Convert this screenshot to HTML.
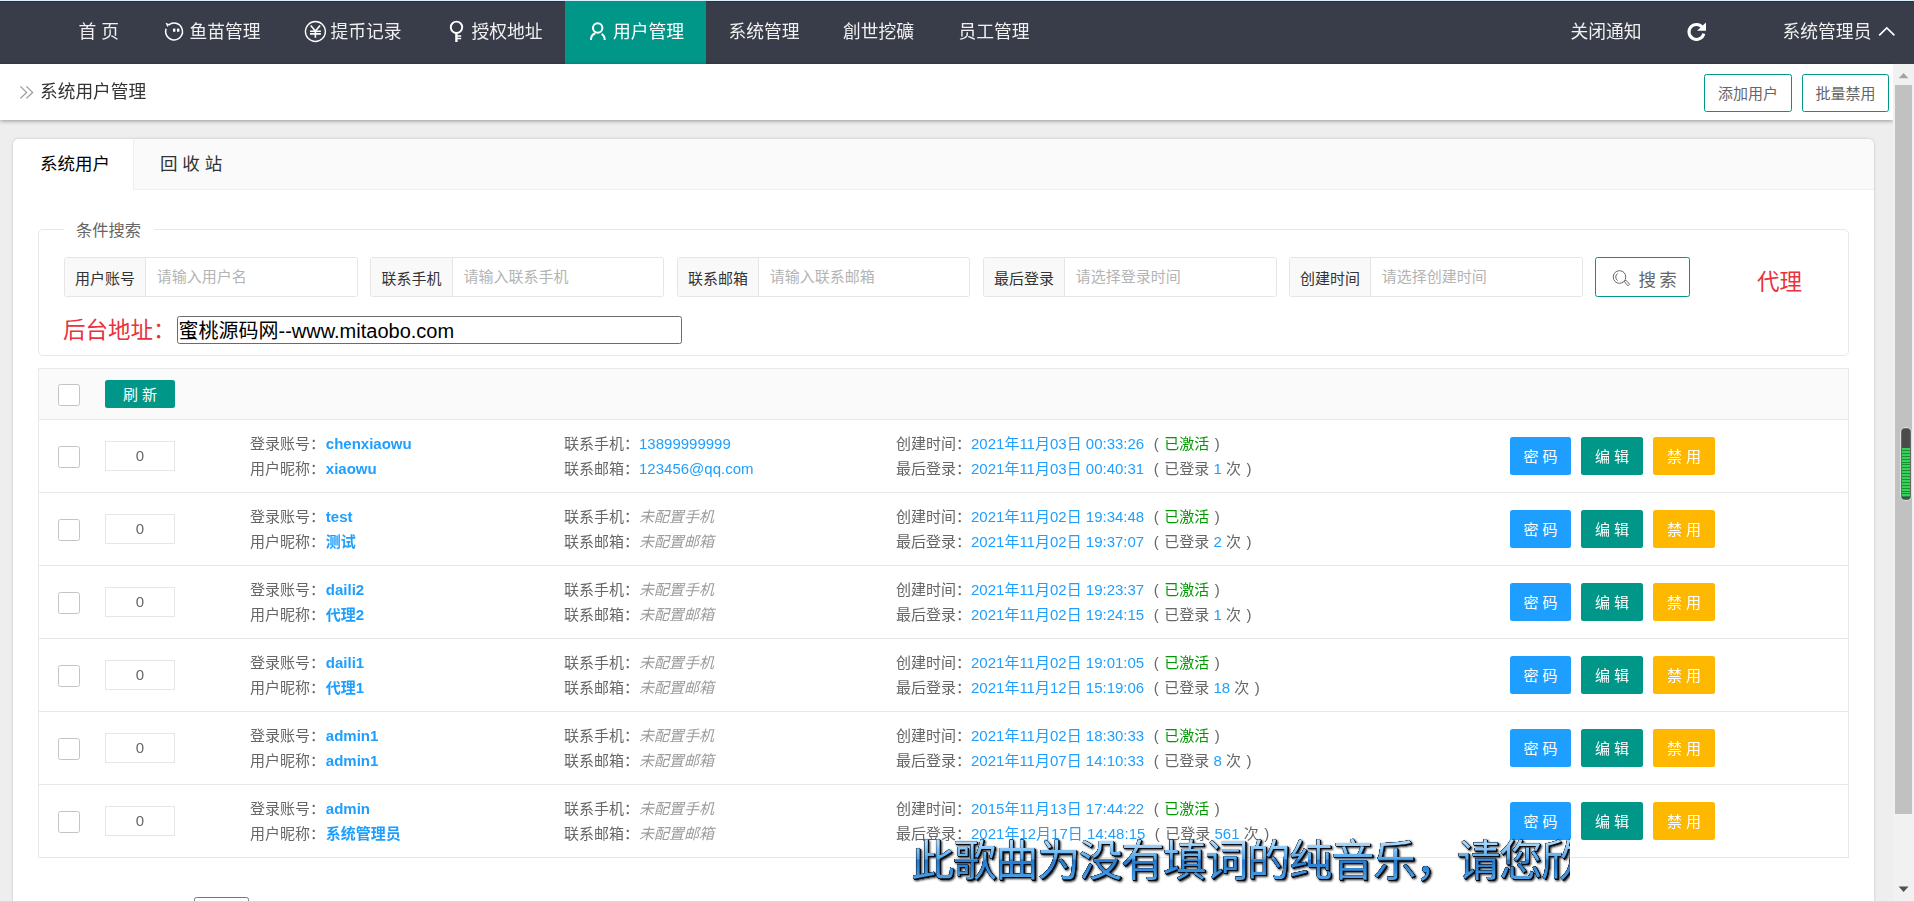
<!DOCTYPE html>
<html lang="zh-CN">
<head>
<meta charset="utf-8">
<title>系统用户管理</title>
<style>
*{box-sizing:border-box;margin:0;padding:0}
html,body{width:1914px;height:902px;overflow:hidden;background:#eee}
body{position:relative;font-family:"Liberation Sans","Noto Sans CJK SC",sans-serif;font-size:15px;color:#666;line-height:1}
.abs{position:absolute}
.t{position:absolute;white-space:nowrap;line-height:1}
svg{position:absolute;overflow:visible}
/* top nav */
#topline{left:0;top:0;width:1914px;height:1px;background:#dcf1ff}
#nav{left:0;top:1px;width:1914px;height:63px;background:#393d49;border-top:1px solid #2f3140}
.nv{color:#f0f0f0;font-size:17.8px;top:24px;margin-left:-0.5px}
#navt{position:absolute;left:0;top:0;width:1914px;height:64px;will-change:transform}
#navact{left:565px;top:1px;width:141px;height:63px;background:#009688}
/* header */
#hdr{left:0;top:64px;width:1893px;height:56px;background:#fff;box-shadow:0 1px 4px rgba(0,0,0,.38)}
#hdr .ttl{left:40.5px;top:82px;font-size:17.5px;color:#333}
.obtn{position:absolute;top:74px;height:38px;border:1px solid #009688;border-radius:2.5px;background:#fff;color:#666;font-size:15px;text-align:center;line-height:37.5px;white-space:nowrap}
/* card */
#card{left:13px;top:139px;width:1861px;height:780px;background:#fff;border-radius:6px 6px 0 0;box-shadow:0 0 3px rgba(0,0,0,.2)}
#tabbar{left:13px;top:139px;width:1861px;height:51px;background:#fafafa;border-bottom:1px solid #eee;border-radius:6px 6px 0 0}
#tabact{left:13px;top:139px;width:121px;height:51px;background:#fff;border-right:1px solid #eee;border-radius:6px 0 0 0}
.tab{font-size:17.5px;top:155.6px}
/* fieldset */
#fs{left:38px;top:229px;width:1811px;height:127px;border:1px solid #e8e8e8;border-radius:5px}
#lg{left:64px;top:220px;width:90px;height:20px;background:#fff}
.grp{position:absolute;top:257px;width:294px;height:40px;border:1px solid #e6e6e6;border-radius:2.5px;background:#fff}
.grp b{position:absolute;left:0;top:0;width:81px;height:38px;background:#f9f9f9;border-right:1px solid #e6e6e6;font-weight:normal;color:#333;font-size:15px;line-height:41px;text-align:center;white-space:nowrap}
.grp i{position:absolute;left:91.8px;top:0;font-style:normal;color:#b4b4b4;font-size:15px;line-height:37px;white-space:nowrap}
/* table */
#tbl{left:38px;top:368px;width:1811px;height:490px;border:1px solid #e8e8e8;background:#fff}
#thead{left:39px;top:369px;width:1809px;height:50px;background:#fafafa}
.hl{position:absolute;left:39px;width:1809px;height:1px;background:#e8e8e8}
.cb{position:absolute;left:58px;width:22px;height:22px;border:1px solid #c4c4c4;border-radius:2.5px;background:#fff}
.srt{position:absolute;left:105px;width:70px;height:30px;border:1px solid #e6e6e6;background:#fff;color:#666;font-size:15px;text-align:center;line-height:28px}
.row{position:absolute;left:0;width:1914px;height:73px}
.row .t{font-size:15px;color:#666}
.l1{top:16.5px}.l2{top:41.5px}
.c1{left:250px}.c2{left:564px}.c3{left:896px}
.bl{color:#1e9fff}.bb{color:#1e9fff;font-weight:bold;margin-left:.8px}
.gr{color:#009a00}
.p1{margin-left:9.5px}.p2{margin-left:5.5px}.p3{margin-left:5.5px}
.em{color:#9c9c9c;font-style:italic}
.btn{position:absolute;top:17.5px;width:62px;height:37.5px;border-radius:2.5px;color:#fff;font-size:15px;line-height:39.5px;text-align:center;white-space:nowrap}
.b1{left:1510px;width:61px;background:#1e9fff}.b2{left:1581px;background:#009688}.b3{left:1653px;background:#ffb800}
</style>
</head>
<body>
<div class="abs" id="topline"></div>
<div class="abs" id="nav"></div>
<div class="abs" id="navact"></div>
<div id="navt">
<span class="t nv" style="left:79px">首 页</span>
<span class="t nv" style="left:190px">鱼苗管理</span>
<span class="t nv" style="left:331px">提币记录</span>
<span class="t nv" style="left:472px">授权地址</span>
<span class="t nv" style="left:613.5px;color:#fff">用户管理</span>
<span class="t nv" style="left:729px">系统管理</span>
<span class="t nv" style="left:843.5px">創世挖礦</span>
<span class="t nv" style="left:959px">员工管理</span>
<span class="t nv" style="left:1571px">关闭通知</span>
<span class="t nv" style="left:1783px">系统管理员</span>
</div>
<!-- fish/face icon -->
<svg style="left:160px;top:17px" width="30" height="30" viewBox="160 17 30 30" fill="none" stroke="#fff" stroke-width="1.5">
<path d="M168.49 25.22 A8.4 8.4 0 1 1 166.1 28.83"/>
<path d="M165.5 22.7 L169.2 24.1 L167.4 26.9 Z" fill="#fff" stroke="none"/>
<rect x="173" y="28.6" width="2.4" height="3.1" fill="#fff" stroke="none"/>
<rect x="177" y="28.6" width="2.4" height="3.1" fill="#fff" stroke="none"/>
</svg>
<!-- yen icon -->
<svg style="left:300px;top:17px" width="30" height="30" viewBox="300 17 30 30" fill="none" stroke="#fff">
<circle cx="315.4" cy="31.5" r="10" stroke-width="1.3"/>
<path d="M310.7 25.5 L315.4 31 L320.1 25.5 M315.4 31 V37.7 M310 31.2 H320.9 M310 33.9 H320.9" stroke-width="1.6"/>
</svg>
<!-- key icon -->
<svg style="left:445px;top:17px" width="30" height="30" viewBox="445 17 30 30" fill="none" stroke="#fff">
<circle cx="456.5" cy="27.3" r="5.7" stroke-width="1.9"/>
<path d="M456.4 33 V42" stroke-width="2.4"/>
<path d="M457 36 H461.2 M457 38.4 H461.2" stroke-width="1.5"/>
</svg>
<!-- user icon -->
<svg style="left:585px;top:17px" width="30" height="30" viewBox="585 17 30 30" fill="none" stroke="#fff" stroke-width="2">
<circle cx="597.7" cy="28" r="4.7"/>
<path d="M591 40 A6.9 6.9 0 0 1 595.3 33.2"/>
<path d="M601.6 33.8 A7 7 0 0 1 604.7 40"/>
</svg>
<!-- refresh icon -->
<svg style="left:1682px;top:17px" width="30" height="30" viewBox="1682 17 30 30" fill="none" stroke="#fff">
<path d="M1702.6 27.6 A7.5 7.5 0 1 0 1703.8 33.6" stroke-width="3"/>
<path d="M1706 22.6 V30.8 H1697 Z" fill="#fff" stroke="none"/>
</svg>
<!-- caret up -->
<svg style="left:1875px;top:20px" width="24" height="20" viewBox="1875 20 24 20" fill="none" stroke="#fff" stroke-width="1.6">
<path d="M1879.2 35.4 L1886.8 27.9 L1894.4 35.4"/>
</svg>
<div class="abs" id="hdr"></div>
<svg style="left:15px;top:82px" width="24" height="22" viewBox="15 82 24 22" fill="none" stroke="#999" stroke-width="1.3">
<path d="M20.4 86.4 L26.6 92.4 L20.4 98.4 M26.4 86.4 L32.6 92.4 L26.4 98.4"/>
</svg>
<span class="t ttl" style="left:40px;top:84px;font-size:17.7px;color:#333">系统用户管理</span>
<div class="obtn" style="left:1704px;width:88px">添加用户</div>
<div class="obtn" style="left:1802px;width:87px">批量禁用</div>
<!-- scrollbar -->
<div class="abs" style="left:1893px;top:64px;width:21px;height:838px;background:#f1f1f1"></div>
<div class="abs" style="left:1895px;top:85px;width:17px;height:729px;background:#c1c1c1"></div>
<svg style="left:1893px;top:64px" width="21" height="838" viewBox="1893 64 21 838"><path d="M1898.7 78.3 H1908.5 L1903.6 73 Z" fill="#a3a3a3"/><path d="M1898.7 886.5 H1908.5 L1903.6 892 Z" fill="#505050"/></svg>

<div class="abs" id="card"></div>
<div class="abs" id="tabbar"></div>
<div class="abs" id="tabact"></div>
<span class="t tab" style="left:40px;color:#000">系统用户</span>
<span class="t tab" style="left:160px;color:#333">回 收 站</span>
<div class="abs" id="fs"></div>
<div class="abs" id="lg"></div>
<span class="t" style="left:76px;top:222px;font-size:16.25px;color:#666">条件搜索</span>
<div class="grp" style="left:64px"><b>用户账号</b><i>请输入用户名</i></div>
<div class="grp" style="left:370px"><b style="width:82px">联系手机</b><i style="left:92.4px">请输入联系手机</i></div>
<div class="grp" style="left:677px;width:293px"><b>联系邮箱</b><i>请输入联系邮箱</i></div>
<div class="grp" style="left:983px"><b>最后登录</b><i>请选择登录时间</i></div>
<div class="grp" style="left:1289px"><b>创建时间</b><i>请选择创建时间</i></div>
<div class="abs" style="left:1595px;top:257px;width:95px;height:40px;border:1px solid #009688;border-radius:2.5px;background:#fff"></div>
<svg style="left:1608px;top:266px" width="26" height="26" viewBox="1608 266 26 26" fill="none" stroke="#6a6a6a" stroke-width="1">
<circle cx="1619.5" cy="277" r="6.3"/>
<path d="M1617.6 273.4 A4.4 4.4 0 0 0 1617.6 280.6"/>
<path d="M1624.3 281.6 L1625.9 280.2 L1629.6 284.2 L1628 285.8 Z"/>
</svg>
<span class="t" style="left:1638.5px;top:271.5px;font-size:17.5px;word-spacing:-1.5px;color:#666">搜 索</span>
<span class="t" style="left:1757px;top:272.2px;font-size:22.5px;color:#e8323c">代理</span>
<span class="t" style="left:63px;top:319.8px;font-size:22.5px;color:#e8323c">后台地址：</span>
<div class="abs" style="left:177px;top:316px;width:505px;height:28px;border:1px solid #6b6b6b;border-radius:2.5px;background:#fff"></div>
<span class="t" style="left:178.5px;top:320.8px;font-size:20px;color:#000">蜜桃源码网--www.mitaobo.com</span>

<div class="abs" id="tbl"></div>
<div class="abs" id="thead"></div>
<div class="cb" style="top:384px"></div>
<div class="abs" style="left:105px;top:380px;width:70px;height:28px;background:#009688;border-radius:2.5px;color:#fff;font-size:15px;line-height:30.5px;text-align:center;white-space:nowrap">刷 新</div>
<div class="hl" style="top:419px"></div>
<div class="row" style="top:419.5px">
<div class="cb" style="top:26.5px"></div><div class="srt" style="top:21.5px">0</div>
<span class="t c1 l1">登录账号：<span class="bb">chenxiaowu</span></span>
<span class="t c1 l2">用户昵称：<span class="bb">xiaowu</span></span>
<span class="t c2 l1">联系手机：<span class="bl">13899999999</span></span>
<span class="t c2 l2">联系邮箱：<span class="bl">123456@qq.com</span></span>
<span class="t c3 l1">创建时间：<span class="bl">2021年11月03日 00:33:26</span><span class="p1">(</span><span class="gr p2">已激活</span><span class="p3">)</span></span>
<span class="t c3 l2">最后登录：<span class="bl">2021年11月03日 00:40:31</span><span class="p1">(</span><span class="p2">已登录</span> <span class="bl">1</span> 次<span class="p3">)</span></span>
<div class="btn b1">密 码</div><div class="btn b2">编 辑</div><div class="btn b3">禁 用</div>
</div>
<div class="hl" style="top:492px"></div>
<div class="row" style="top:492.5px">
<div class="cb" style="top:26.5px"></div><div class="srt" style="top:21.5px">0</div>
<span class="t c1 l1">登录账号：<span class="bb">test</span></span>
<span class="t c1 l2">用户昵称：<span class="bb">测试</span></span>
<span class="t c2 l1">联系手机：<span class="em">未配置手机</span></span>
<span class="t c2 l2">联系邮箱：<span class="em">未配置邮箱</span></span>
<span class="t c3 l1">创建时间：<span class="bl">2021年11月02日 19:34:48</span><span class="p1">(</span><span class="gr p2">已激活</span><span class="p3">)</span></span>
<span class="t c3 l2">最后登录：<span class="bl">2021年11月02日 19:37:07</span><span class="p1">(</span><span class="p2">已登录</span> <span class="bl">2</span> 次<span class="p3">)</span></span>
<div class="btn b1">密 码</div><div class="btn b2">编 辑</div><div class="btn b3">禁 用</div>
</div>
<div class="hl" style="top:565px"></div>
<div class="row" style="top:565.5px">
<div class="cb" style="top:26.5px"></div><div class="srt" style="top:21.5px">0</div>
<span class="t c1 l1">登录账号：<span class="bb">daili2</span></span>
<span class="t c1 l2">用户昵称：<span class="bb">代理2</span></span>
<span class="t c2 l1">联系手机：<span class="em">未配置手机</span></span>
<span class="t c2 l2">联系邮箱：<span class="em">未配置邮箱</span></span>
<span class="t c3 l1">创建时间：<span class="bl">2021年11月02日 19:23:37</span><span class="p1">(</span><span class="gr p2">已激活</span><span class="p3">)</span></span>
<span class="t c3 l2">最后登录：<span class="bl">2021年11月02日 19:24:15</span><span class="p1">(</span><span class="p2">已登录</span> <span class="bl">1</span> 次<span class="p3">)</span></span>
<div class="btn b1">密 码</div><div class="btn b2">编 辑</div><div class="btn b3">禁 用</div>
</div>
<div class="hl" style="top:638px"></div>
<div class="row" style="top:638.5px">
<div class="cb" style="top:26.5px"></div><div class="srt" style="top:21.5px">0</div>
<span class="t c1 l1">登录账号：<span class="bb">daili1</span></span>
<span class="t c1 l2">用户昵称：<span class="bb">代理1</span></span>
<span class="t c2 l1">联系手机：<span class="em">未配置手机</span></span>
<span class="t c2 l2">联系邮箱：<span class="em">未配置邮箱</span></span>
<span class="t c3 l1">创建时间：<span class="bl">2021年11月02日 19:01:05</span><span class="p1">(</span><span class="gr p2">已激活</span><span class="p3">)</span></span>
<span class="t c3 l2">最后登录：<span class="bl">2021年11月12日 15:19:06</span><span class="p1">(</span><span class="p2">已登录</span> <span class="bl">18</span> 次<span class="p3">)</span></span>
<div class="btn b1">密 码</div><div class="btn b2">编 辑</div><div class="btn b3">禁 用</div>
</div>
<div class="hl" style="top:711px"></div>
<div class="row" style="top:711.5px">
<div class="cb" style="top:26.5px"></div><div class="srt" style="top:21.5px">0</div>
<span class="t c1 l1">登录账号：<span class="bb">admin1</span></span>
<span class="t c1 l2">用户昵称：<span class="bb">admin1</span></span>
<span class="t c2 l1">联系手机：<span class="em">未配置手机</span></span>
<span class="t c2 l2">联系邮箱：<span class="em">未配置邮箱</span></span>
<span class="t c3 l1">创建时间：<span class="bl">2021年11月02日 18:30:33</span><span class="p1">(</span><span class="gr p2">已激活</span><span class="p3">)</span></span>
<span class="t c3 l2">最后登录：<span class="bl">2021年11月07日 14:10:33</span><span class="p1">(</span><span class="p2">已登录</span> <span class="bl">8</span> 次<span class="p3">)</span></span>
<div class="btn b1">密 码</div><div class="btn b2">编 辑</div><div class="btn b3">禁 用</div>
</div>
<div class="hl" style="top:784px"></div>
<div class="row" style="top:784.5px">
<div class="cb" style="top:26.5px"></div><div class="srt" style="top:21.5px">0</div>
<span class="t c1 l1">登录账号：<span class="bb">admin</span></span>
<span class="t c1 l2">用户昵称：<span class="bb">系统管理员</span></span>
<span class="t c2 l1">联系手机：<span class="em">未配置手机</span></span>
<span class="t c2 l2">联系邮箱：<span class="em">未配置邮箱</span></span>
<span class="t c3 l1">创建时间：<span class="bl">2015年11月13日 17:44:22</span><span class="p1">(</span><span class="gr p2">已激活</span><span class="p3">)</span></span>
<span class="t c3 l2">最后登录：<span class="bl">2021年12月17日 14:48:15</span><span class="p1">(</span><span class="p2">已登录</span> <span class="bl">561</span> 次<span class="p3">)</span></span>
<div class="btn b1">密 码</div><div class="btn b2">编 辑</div><div class="btn b3">禁 用</div>
</div>
<div class="abs" style="left:194px;top:897px;width:55px;height:10px;border:1px solid #767676;border-radius:2.5px;background:#fff"></div>
<div class="abs" style="left:0;top:901px;width:1914px;height:1px;background:#d9d9e6"></div>
<!-- desktop lyric overlay -->
<div class="abs" id="lyr" style="left:911px;top:828px;width:659px;height:66px;overflow:hidden">
<span class="t" id="lyrt" style="left:0px;top:8.2px;font-size:43.5px;letter-spacing:-1.5px;font-weight:400;background:linear-gradient(to bottom,#a8d8fc 0%,#a8d8fc 12%,#4fa3e6 41.5%,#2a7bcc 42.5%,#2f85d4 56%,#79c1f6 100%);-webkit-background-clip:text;background-clip:text;-webkit-text-fill-color:transparent;color:transparent;filter:drop-shadow(0 0 0.6px #060d18) drop-shadow(0 0 0.6px #060d18) drop-shadow(0 0 0.7px #060d18) drop-shadow(1px 1px 0.6px #060d18) drop-shadow(1px 1px 1.2px rgba(0,0,0,.85));padding:4px 4px 8px 0">此歌曲为没有填词的纯音乐，请您欣</span>
</div>
<!-- volume meter widget -->
<div class="abs" style="left:1900px;top:427px;width:12px;height:73.5px;border-radius:5px;background:#4b4b4b;border:1px solid #dcdcdc;box-shadow:0 0 0 0.5px #8a8a8a inset"></div>
<div class="abs" style="left:1902px;top:447.5px;width:8px;height:49.5px;background:repeating-linear-gradient(to bottom,#35d35a 0,#35d35a 1.9px,#1e8a3a 1.9px,#1e8a3a 2.9px)"></div>

</body>
</html>
